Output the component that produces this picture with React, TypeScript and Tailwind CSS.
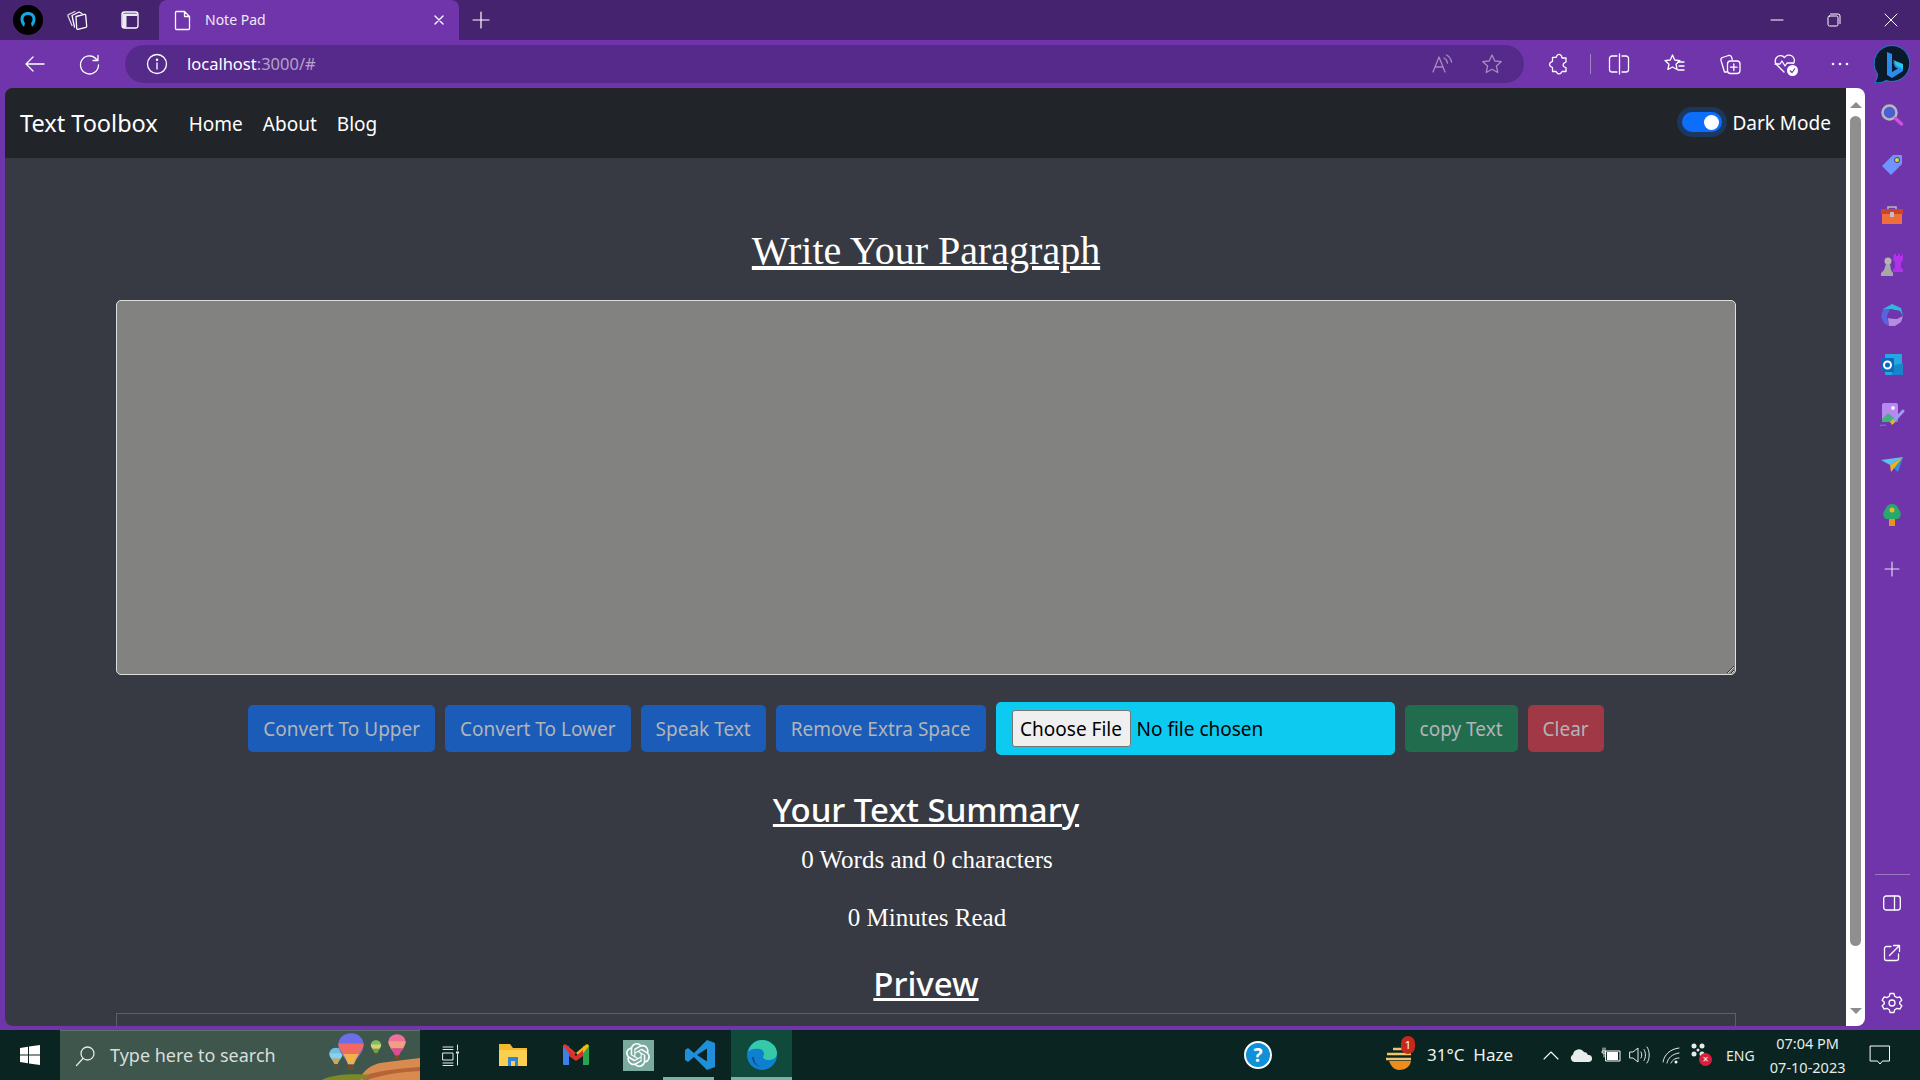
import React from 'react';
import { SiOpenai } from 'react-icons/si';

const Ic = ({ children, w = 24, h = 24, className = '' }: { children: React.ReactNode; w?: number; h?: number; className?: string }) => (
  <svg width={w} height={h} viewBox={`0 0 ${w} ${h}`} fill="none" stroke="currentColor" strokeWidth="1.3" strokeLinecap="round" strokeLinejoin="round" className={`shrink-0 ${className}`}>
    {children}
  </svg>
);

const SideSlot = ({ children }: { children: React.ReactNode }) => (
  <div className="h-[50px] flex items-center justify-center">{children}</div>
);

const Btn = ({ label, color }: { label: string; color: string }) => (
  <button className={`h-[47px] px-[15px] pt-[2px] rounded-[5px] text-[19px] text-[#b1b5b9] ${color}`}>{label}</button>
);

const Balloon = ({ x, y, s, a, b, c }: { x: number; y: number; s: number; a: string; b: string; c: string }) => (
  <g transform={`translate(${x} ${y}) scale(${s})`}>
    <path d="M0 -12C7 -12 11 -7 11 -2C11 5 4 10 2.500 15H-2.500C-4 10 -11 5 -11 -2C-11 -7 -7 -12 0 -12Z" fill={a} />
    <path d="M-11 -3H11C11 1 9 3 7 6H-7C-9 3 -11 1 -11 -3Z" fill={b} />
    <path d="M-7 6H7C5 9 3.500 12 2.500 15H-2.500C-3.500 12 -5 9 -7 6Z" fill={c} />
    <rect x="-2.500" y="16" width="5" height="4" fill="#7a4a22" />
  </g>
);

const TabRow = () => (
  <div className="h-10 bg-[#46236e] flex items-center text-white">
    <div className="ml-[13px] w-[30px] h-[30px] rounded-full bg-black flex items-center justify-center">
      <svg width="20" height="20" viewBox="0 0 20 20" fill="none">
        <path d="M6 17C3 14 2.500 11 2.500 9C2.500 4.500 6 2 10 2C14 2 17.500 4.500 17.500 9C17.500 11 17 14 14 17L13 13C14 12 14.500 10.500 14.500 9C14.500 6.500 12.500 5 10 5C7.500 5 5.500 6.500 5.500 9C5.500 10.500 6 12 7 13Z" fill="#11a8e8" />
      </svg>
    </div>
    <Ic className="ml-[22px]">
      <path d="M11 8.500l8.500-2.200a1 1 0 0 1 1.200.8l1 11.200a1 1 0 0 1-.8 1l-8 2a1 1 0 0 1-1.200-.8z" />
      <path d="M9.500 19L7 7.500l7-3.500 3 1.500" />
      <path d="M7 17.500L3 8a1 1 0 0 1 .5-1.300L10 3.500" opacity=".8" />
    </Ic>
    <Ic className="ml-[29px]">
      <rect x="4" y="4" width="16" height="16" rx="2.500" />
      <path d="M4.500 5.500h15v2.500h-15zM4.500 8h4v11.500h-4z" fill="currentColor" stroke="none" opacity=".9" />
    </Ic>
    <div className="ml-[17px] w-[300px] h-10 bg-[#7035ab] rounded-t-[8px] flex items-center">
      <Ic className="ml-[12px]">
        <path d="M5.500 3.500h8l5 5v12a1 1 0 0 1-1 1h-12a1 1 0 0 1-1-1v-16a1 1 0 0 1 1-1zM13.500 3.500v5h5" />
      </Ic>
      <span className="ml-[10px] text-[14px] text-[#f0e9f6] mb-[2px]">Note Pad</span>
      <Ic w={14} h={14} className="ml-auto mr-[13px]"><path d="M3 3l8 8M11 3l-8 8" strokeWidth="1.400" /></Ic>
    </div>
    <Ic className="ml-[10px]"><path d="M12 4v16M4 12h16" strokeWidth="1.200" /></Ic>
    <div className="flex-1" />
    <div className="w-[57px] flex justify-center"><Ic w={14} h={14}><path d="M1 7h12" strokeWidth="1" /></Ic></div>
    <div className="w-[57px] flex justify-center"><Ic w={14} h={14}><rect x="1" y="3" width="10" height="10" rx="1.500" strokeWidth="1" /><path d="M3.500 1h7.500a2 2 0 0 1 2 2v7.500" strokeWidth="1" /></Ic></div>
    <div className="w-[58px] flex justify-center"><Ic w={14} h={14}><path d="M1 1l12 12M13 1L1 13" strokeWidth="1" /></Ic></div>
  </div>
);

const Toolbar = () => (
  <div className="h-12 bg-[#7035ab] flex items-center text-white relative">
    <Ic className="ml-[23px]"><path d="M3 12h18M10 5l-7 7 7 7" strokeWidth="1.300" /></Ic>
    <Ic className="ml-[31px]"><path d="M19 8a9 9 0 1 0 1.500 5M20 3.500v5h-5" strokeWidth="1.300" /></Ic>
    <div className="ml-[23px] w-[1399px] h-[38px] rounded-full bg-[#562a8b] flex items-center">
      <Ic className="ml-[20px]">
        <circle cx="12" cy="12" r="9.500" />
        <path d="M12 11v6" /><circle cx="12" cy="7.800" r=".6" fill="currentColor" />
      </Ic>
      <span className="ml-[18px] text-[16.500px]">localhost<span className="text-[#b3a3c6]">:3000/#</span></span>
      <Ic className="ml-auto text-[#a58bc0]">
        <path d="M3 20l6-15 6 15M5.500 15h7" /><path d="M14 6c2 1 3 2.500 3.500 5M16.500 3c3 1.500 4.500 4 5 7" />
      </Ic>
      <Ic className="ml-[26px] mr-[20px] text-[#a58bc0]">
        <path d="M12 3l2.800 6 6.400.7-4.800 4.300 1.400 6.500L12 17.200 6.200 20.500l1.400-6.500L2.800 9.700 9.200 9z" />
      </Ic>
    </div>
    <Ic className="ml-[23px]">
      <path d="M10 3.500a2.500 2.500 0 0 1 4.500 0.500l.5 2h4v4l-1.500.8a2.300 2.300 0 0 0 0 4.200l1.500.8v3.700h-4l-1 1.500a2.500 2.500 0 0 1-4-.2l-1-1.300H5.500v-4l-1.500-.8a2.500 2.500 0 0 1 0-4.500l1.500-.8v-4h3.500z" />
    </Ic>
    <div className="ml-[19px] w-[1px] h-[20px] bg-[#a183c4]" />
    <Ic className="ml-[16px]">
      <path d="M10 4H5a2.500 2.500 0 0 0-2.500 2.500v11A2.500 2.500 0 0 0 5 20h5M15 4h4a2.500 2.500 0 0 1 2.500 2.500v11A2.500 2.500 0 0 1 19 20h-4M12.500 2v20" />
    </Ic>
    <Ic className="ml-[32px]">
      <path d="M9.500 3l2.200 5 5.300.6-4 3.600 1.100 5.300L9.500 15l-4.600 2.500L6 12.200 2 8.600 7.300 8z" />
      <path d="M15 10h6M16 14h5M15 18h6" />
    </Ic>
    <Ic className="ml-[31px]">
      <path d="M9 20H6.500L3 8.500a2.500 2.500 0 0 1 1.500-3l6-2a2.500 2.500 0 0 1 3 1.500l.8 2.500" />
      <rect x="9.500" y="9" width="12.500" height="12.500" rx="3" /><path d="M15.800 12v6.500M12.500 15.200H19" />
    </Ic>
    <div className="ml-[31px] relative w-6 h-6">
      <Ic>
        <path d="M11 20L3.500 12.500A5.300 5.300 0 0 1 11.500 5.500a5.300 5.300 0 0 1 9 6" />
        <path d="M2 12h5l2-3 3 5 2-3h6" />
      </Ic>
      <div className="absolute right-[-1px] bottom-[0px] w-[11px] h-[11px] rounded-full bg-white flex items-center justify-center">
        <svg width="7" height="7" viewBox="0 0 7 7" fill="none" stroke="#7035ab" strokeWidth="1.200"><path d="M1 3.500l2 2 3-4" /></svg>
      </div>
    </div>
    <Ic className="ml-[31px]"><circle cx="5" cy="12" r="1.300" fill="currentColor" stroke="none" /><circle cx="12" cy="12" r="1.300" fill="currentColor" stroke="none" /><circle cx="19" cy="12" r="1.300" fill="currentColor" stroke="none" /></Ic>
    <div className="absolute left-[1874px] top-[5px] w-[38px] h-[38px]">
      <svg width="38" height="38" viewBox="0 0 38 38">
        <path d="M19 0.500A18 18 0 1 1 12 35.500C8 38 4 38 0.500 37.500C3 35 3.500 32 3.500 29A18 18 0 0 1 19 0.500Z" fill="#0b1a2a" stroke="#1c7fd0" strokeWidth="1" />
        <path d="M13 7l5 2v18l6-3.500-3-1.500-2-5 10 4v5l-11 7-5-3z" fill="#2b8cf0" />
        <path d="M19 15l10 4v5l-6-3z" fill="#28c8e8" />
      </svg>
    </div>
  </div>
);

const Sidebar = () => (
  <div className="w-[55px] pr-[1px] flex flex-col bg-[#7035ab]">
    <div className="pt-[2px] flex flex-col">
      <SideSlot>
        <svg width="24" height="24" viewBox="0 0 24 24" fill="none">
          <circle cx="9.500" cy="9.500" r="7" fill="#4a5fd0" stroke="#b9b6bd" strokeWidth="2.500" />
          <path d="M15.500 15.500l6 5.500" stroke="#d64de0" strokeWidth="3.500" strokeLinecap="round" />
        </svg>
      </SideSlot>
      <SideSlot>
        <svg width="22" height="22" viewBox="0 0 22 22">
          <path d="M12 1h8a1 1 0 0 1 1 1v8L10 21 1 12Z" fill="#6f93ff" />
          <circle cx="16" cy="6" r="2.500" fill="#f5d327" stroke="#33408a" />
        </svg>
      </SideSlot>
      <SideSlot>
        <svg width="24" height="20" viewBox="0 0 24 20">
          <path d="M8 4V2h8v2" stroke="#b9b6bd" strokeWidth="1.500" fill="none" />
          <rect x="1" y="4" width="22" height="5" fill="#c9452a" />
          <rect x="2" y="9" width="20" height="10" fill="#ee6f3c" />
          <rect x="10" y="7" width="4" height="5" fill="#c4c0c0" />
        </svg>
      </SideSlot>
      <SideSlot>
        <svg width="24" height="24" viewBox="0 0 24 24">
          <path d="M14 1h2v2h2V1h2v2h2V1h1v6l-2 2v6l2 1v3H13v-3l2-1V9l-2-2z" fill="#b232ea" />
          <circle cx="8" cy="8" r="3.500" fill="#b4b4b4" />
          <path d="M6 11h4l1 6 2 3v3H1v-3l3-3z" fill="#a8a8a8" />
        </svg>
      </SideSlot>
      <SideSlot>
        <svg width="24" height="24" viewBox="0 0 24 24">
          <path d="M12 1L21 5 23 13 20 8 10 6 5 10 3 6Z" fill="#31b6e0" />
          <path d="M3 6L1 14 4 20 9 23 7 13 10 6Z" fill="#5a62e0" />
          <path d="M9 23L15 23 21 19 23 13 17 16 8 15Z" fill="#b58de0" />
          <path d="M10 6L20 8 17 16 8 15Z" fill="#7035ab" />
        </svg>
      </SideSlot>
      <SideSlot>
        <svg width="24" height="24" viewBox="0 0 24 24">
          <rect x="5" y="1" width="17" height="21" rx="1" fill="#26a6e0" />
          <path d="M12 13l11 -3v12h-11z" fill="#1785c8" />
          <rect x="1" y="5" width="13" height="14" rx="1" fill="#0a68c4" />
          <circle cx="7.500" cy="12" r="3.500" fill="none" stroke="#fff" strokeWidth="2" />
        </svg>
      </SideSlot>
      <SideSlot>
        <svg width="26" height="26" viewBox="0 0 26 26">
          <rect x="3" y="1" width="16" height="18" rx="2" fill="#b888f0" />
          <path d="M3 17l6-6 6 5 4 3v1H3z" fill="#45b080" />
          <circle cx="14" cy="6" r="2" fill="#f1e9ff" />
          <path d="M14 20l10-11" stroke="#9a9cf0" strokeWidth="3" strokeLinecap="round" />
          <path d="M11 20l3-3 2 3-3 3z" fill="#f2b01e" />
          <path d="M1 24c2-2 4 0 6-1" stroke="#30c090" strokeWidth="1" fill="none" />
        </svg>
      </SideSlot>
      <SideSlot>
        <svg width="24" height="18" viewBox="0 0 24 18">
          <path d="M1 4L23 1 10 9z" fill="#59c2f0" />
          <path d="M23 1L18 16 10 9z" fill="#2e8fe0" />
          <path d="M10 9l13-8-12 15z" fill="#f2b01e" />
        </svg>
      </SideSlot>
      <SideSlot>
        <svg width="20" height="24" viewBox="0 0 20 24">
          <path d="M10 1c4 0 6 3 7 6 2 2 3 6-1 9H4C0 13 1 9 3 7 4 4 6 1 10 1z" fill="#27a96e" />
          <rect x="7" y="16" width="6" height="7" fill="#e8941c" />
          <circle cx="10" cy="7" r="2.500" fill="#ecb52c" />
        </svg>
      </SideSlot>
      <div className="h-[58px] flex items-center justify-center text-[#e8def2]">
        <Ic w={16} h={16}><path d="M8 1v14M1 8h14" strokeWidth="1.100" /></Ic>
      </div>
    </div>
    <div className="flex-1" />
    <div className="mx-auto w-[35px] h-[1px] bg-[#9a78c0]" />
    <div className="flex flex-col text-white pt-[3px] mb-[-2px]">
      <SideSlot>
        <Ic w={18} h={16}><rect x=".7" y="1" width="16.600" height="14" rx="2.500" /><path d="M11.500 1v14" /></Ic>
      </SideSlot>
      <SideSlot>
        <Ic w={18} h={18}><path d="M8 2.500H3.500a2 2 0 0 0-2 2v10a2 2 0 0 0 2 2h10a2 2 0 0 0 2-2V10M6.500 11.500L16.500 1.500M10.500 1.500h6v6" /></Ic>
      </SideSlot>
      <SideSlot>
        <Ic w={22} h={22}>
          <circle cx="11" cy="11" r="3" />
          <path d="M9 1.500h4l.7 2.800 2.300 1.300 2.800-.8 2 3.400-2.100 2v1.600l2.100 2-2 3.400-2.800-.8-2.300 1.300-.7 2.800H9l-.7-2.800-2.300-1.300-2.800.8-2-3.400 2.100-2v-1.600l-2.100-2 2-3.400 2.800.8 2.300-1.300z" />
        </Ic>
      </SideSlot>
    </div>
  </div>
);

const Scrollbar = () => (
  <div className="w-[19px] bg-white rounded-r-[8px] flex flex-col items-center">
    <div className="mt-[14px] w-0 h-0 border-x-[6px] border-x-transparent border-b-[6px] border-b-[#8c8c8c]" />
    <div className="mt-[8px] w-[11px] flex-1 rounded-full bg-[#8f8f8f]" />
    <div className="mt-[62px] mb-[12px] w-0 h-0 border-x-[6px] border-x-transparent border-t-[6px] border-t-[#8c8c8c]" />
  </div>
);

const Page = () => (
  <div className="flex-1 min-w-0 h-full bg-[#373a42] rounded-l-[8px] overflow-hidden text-white">
    <nav className="h-[70px] bg-[#212529] flex items-center pl-[15px] pr-[15px] pt-[2px] text-[19px]">
      <span className="text-[23.500px] mr-[31px]">Text Toolbox</span>
      <a className="mr-[20px]">Home</a>
      <a className="mr-[20px]">About</a>
      <a>Blog</a>
      <div className="ml-auto flex items-center mt-[-2px]">
        <div className="w-[40px] h-[20px] rounded-full bg-[#0d6efd] ring-[5px] ring-[#0d6efd]/25 flex items-center justify-end pr-[3px] mb-[2px]">
          <div className="w-[15px] h-[15px] rounded-full bg-white" />
        </div>
        <span className="ml-[10px]">Dark Mode</span>
      </div>
    </nav>
    <main className="w-[1620px] ml-[111px] pt-[69px] flex flex-col items-center">
      <h1 className="font-['Liberation_Serif',serif] text-[40px] leading-[48px] underline">Write Your Paragraph</h1>
      <textarea readOnly className="mt-[25px] w-full h-[375px] block bg-[#828280] border border-[#dedede] rounded-[5px]" />
      <div className="mt-[27px] h-[53px] flex items-center gap-[10px] text-[19px]">
        <Btn label="Convert To Upper" color="bg-[#1b5cb9]" />
        <Btn label="Convert To Lower" color="bg-[#1b5cb9]" />
        <Btn label="Speak Text" color="bg-[#1b5cb9]" />
        <Btn label="Remove Extra Space" color="bg-[#1b5cb9]" />
        <div className="w-[399px] h-[53px] rounded-[5px] bg-[#0dcaf0] pl-[16px] flex items-center text-black">
          <div className="h-[37px] w-[119px] pt-[1px] bg-[#efefef] border border-[#767676] rounded-[3px] flex items-center justify-center">Choose File</div>
          <span className="ml-[6px] pt-[1px]">No file chosen</span>
        </div>
        <Btn label="copy Text" color="bg-[#226c4e]" />
        <Btn label="Clear" color="bg-[#a03845]" />
      </div>
      <h3 className="mt-[34px] text-[33px] leading-[42px] font-medium underline">Your Text Summary</h3>
      <p className="mt-[10px] pl-[2px] font-['Liberation_Serif',serif] text-[25px] leading-[37.5px]">0 Words and 0 characters</p>
      <p className="mt-[20px] pl-[2px] font-['Liberation_Serif',serif] text-[25px] leading-[37.5px]">0 Minutes Read</p>
      <h3 className="mt-[27px] text-[33px] leading-[42px] font-medium underline">Privew</h3>
      <div className="mt-[8px] w-full h-[100px] border border-[#5b5f66]" />
    </main>
  </div>
);

const Taskbar = () => (
  <div className="h-[50px] bg-[#0a2421] flex items-center text-[#e6ecea] relative">
    <div className="w-[60px] flex justify-center">
      <svg width="20" height="20" viewBox="0 0 20 20" fill="#fff"><path d="M0 3l8-1.200V9.500H0zM9 1.600L20 0v9.500H9zM0 10.500h8v7.700L0 17zM9 10.500h11V20L9 18.400z" /></svg>
    </div>
    <div className="w-[360px] h-[50px] bg-[#3e564c] border-t border-[#5d7268] flex items-center relative overflow-hidden">
      <Ic w={22} h={22} className="ml-[14px] text-[#e4e9e7]"><circle cx="13.500" cy="8.500" r="6.500" /><path d="M9 13.500L2.500 20.500" /></Ic>
      <span className="ml-[14px] text-[18px] text-[#d9dfdc]">Type here to search</span>
      <svg width="100" height="50" viewBox="0 0 100 50" className="absolute right-0 top-0">
        <path d="M38 50c6-12 14-16 22-18 12-2 26-3 40-5v23z" fill="#d98a4e" />
        <path d="M40 46c15-6 35-8 60-10v4c-20 1-40 4-55 10z" fill="#b5643a" />
        <path d="M0 50c8-6 30-8 52-6 -6 3-12 5-16 6z" fill="#7b8a24" />
        <Balloon x={16} y={24} s={0.6} a="#6ebfe0" b="#8ad0e8" c="#c8a860" />
        <Balloon x={31} y={16} s={1.15} a="#6c6ee8" b="#f06a60" c="#f0b04a" />
        <Balloon x={56} y={15} s={0.47} a="#7fbe60" b="#d8d070" c="#6ea050" />
        <Balloon x={77} y={12.500} s={0.78} a="#ee6f9c" b="#f0a080" c="#d84f90" />
      </svg>
    </div>
    <div className="w-[61px] flex justify-center">
      <Ic w={20} h={26}>
        <path d="M2 5h10M2 7.500h10M2 11h10v7H2zM2 21h10M2 23.500h10M16.500 3v5M16.500 12v11" strokeWidth="1" />
        <rect x="15" y="9.500" width="3" height="2" fill="currentColor" stroke="none" />
      </Ic>
    </div>
    <div className="w-[64px] flex justify-center">
      <svg width="28" height="24" viewBox="0 0 28 24">
        <path d="M0 1h11l3 4h14v18H0z" fill="#f5b92c" />
        <path d="M0 7h28v16H0z" fill="#fbd050" />
        <path d="M9 23v-9h10v9h-3v-5h-4v5z" fill="#2f86d8" />
      </svg>
    </div>
    <div className="w-[62px] flex justify-center">
      <svg width="28" height="24" viewBox="0 0 28 24">
        <path d="M1 3l6 0v19H2a1 1 0 0 1-1-1z" fill="#3f7fe8" />
        <path d="M21 3h6v18a1 1 0 0 1-1 1h-5z" fill="#2aa44f" />
        <path d="M1 3a2 2 0 0 1 3-1.500L14 10l-4 4z" fill="#e3382c" />
        <path d="M27 3a2 2 0 0 0-3-1.500L14 10l4 4z" fill="#f5b90f" />
        <path d="M7 7l7 6 7-6v6l-7 5-7-5z" fill="#d7322a" />
      </svg>
    </div>
    <div className="w-[62px] flex justify-center">
      <div className="w-[31px] h-[31px] bg-[#7aab9e] flex items-center justify-center text-white">
        <SiOpenai size={24} />
      </div>
    </div>
    <div className="w-[62px] h-[50px] flex items-center justify-center relative">
      <svg width="32" height="32" viewBox="0 0 32 32">
        <path d="M23 1L10 14 4 9 1 11v10l3 2 6-5 13 13 8-3V4z" fill="#1f8fdc" />
        <path d="M23 9.500L13 16l10 6.500z" fill="#0a2421" />
      </svg>
      <div className="absolute left-[-6px] bottom-0 w-[51px] h-[3px] bg-[#79b3a5]" />
    </div>
    <div className="w-[61px] h-[50px] bg-[#0f4a3a] flex items-center justify-center relative">
      <svg width="32" height="32" viewBox="0 0 32 32">
        <circle cx="16" cy="16" r="15" fill="#0f7fd0" />
        <path d="M2 13C4 5 10 1 16 1c8 0 15 6 15 13 0 5-4 7-8 7-3 0-6-1-6-3 2-3 1-7-3-8-5-1-10 0-12 3z" fill="#35c9a8" />
        <path d="M8 18c0 6 4 10 9 10-6 0-11-4-11-10z" fill="#0c4e90" />
      </svg>
      <div className="absolute inset-x-0 bottom-0 h-[3px] bg-[#79b3a5]" />
    </div>
    <div className="w-[451px]" />
    <div className="w-[30px] flex justify-center">
      <div className="w-[28px] h-[28px] rounded-full bg-[#0f90d8] border-[2.500px] border-white flex items-center justify-center text-white text-[19px] font-bold leading-none">?</div>
    </div>
    <div className="ml-[110px] relative w-[32px] h-[32px]">
      <svg width="32" height="32" viewBox="0 0 32 32" fill="none">
        <path d="M6 22h22c-1 6-6 9-12 9-5 0-8-4-10-9z" fill="#f08c1a" />
        <path d="M10 10h15M4 15h24M3 20h25" stroke="#f2c46a" strokeWidth="2.500" />
      </svg>
      <div className="absolute left-[18px] top-[-3px] w-[14px] h-[18px] rounded-full bg-[#c6281e] text-white text-[11px] leading-[18px] text-center">1</div>
    </div>
    <span className="ml-[12px] text-[17px] whitespace-pre text-[#eef2f0]">31°C  Haze</span>
    <Ic w={18} h={12} className="ml-[29px] text-white"><path d="M2 10l7-7 7 7" strokeWidth="1.100" /></Ic>
    <svg width="22" height="14" viewBox="0 0 22 14" className="ml-[10px]"><path d="M4 14a4 4 0 0 1-1-7.500A6 6 0 0 1 14 4a4.500 4.500 0 0 1 4 3 3.500 3.500 0 0 1 1 7z" fill="#e8ecea" /></svg>
    <Ic w={20} h={18} className="ml-[9px] text-white">
      <rect x="5" y="5" width="14" height="10" strokeWidth="1" /><rect x="6" y="6" width="11" height="8" fill="currentColor" stroke="none" />
      <path d="M2 2v3M4 2v3M1.500 5h3v2h-3zM3 7v4" strokeWidth=".9" />
    </Ic>
    <Ic w={22} h={20} className="ml-[8px] text-white">
      <path d="M1 7h3l5-4v14l-5-4H1zM12 7c1 2 1 4 0 6M15 4.500c2 3 2 8 0 11M18 2c3 4 3 12 0 16" strokeWidth=".9" />
    </Ic>
    <Ic w={20} h={20} className="ml-[10px] text-white">
      <path d="M2 17C3 10 9 4 18 3M6 18c1-5 5-9 12-10M10 18c1-2 3-5 8-5" strokeWidth=".9" />
      <circle cx="15" cy="17" r="1.500" fill="currentColor" stroke="none" />
    </Ic>
    <div className="ml-[10px] relative w-[20px] h-[24px]">
      <svg width="14" height="20" viewBox="0 0 14 20" fill="#e6ecea"><circle cx="3" cy="3" r="2.500" /><circle cx="11" cy="3" r="2.500" /><circle cx="3" cy="11" r="2.500" /><circle cx="11" cy="11" r="2.500" /><circle cx="7" cy="7" r="1.500" /></svg>
      <div className="absolute left-[8px] top-[10px] w-[13px] h-[13px] rounded-full bg-[#d81f3c] text-white text-[10px] leading-[12px] text-center">×</div>
    </div>
    <span className="ml-[15px] text-[14px]">ENG</span>
    <div className="ml-[9px] w-[88px] text-center text-[14.500px] leading-[24px] shrink-0">
      <div>07:04 PM</div>
      <div>07-10-2023</div>
    </div>
    <Ic w={22} h={24} className="ml-[17px] text-white"><path d="M1.500 3h19v15h-7l-2.500 3-2.500-3h-7z" strokeWidth="1" /></Ic>
  </div>
);

const App: React.FC = () => {
  return (
    <div className="w-[1920px] h-[1080px] flex flex-col overflow-hidden bg-[#7035ab] font-['Noto_Sans',sans-serif]">
      <TabRow />
      <Toolbar />
      <div className="h-[938px] flex pl-[5px]">
        <Page />
        <Scrollbar />
        <Sidebar />
      </div>
      <div className="h-[4px]" />
      <Taskbar />
    </div>
  );
};

export default App;
